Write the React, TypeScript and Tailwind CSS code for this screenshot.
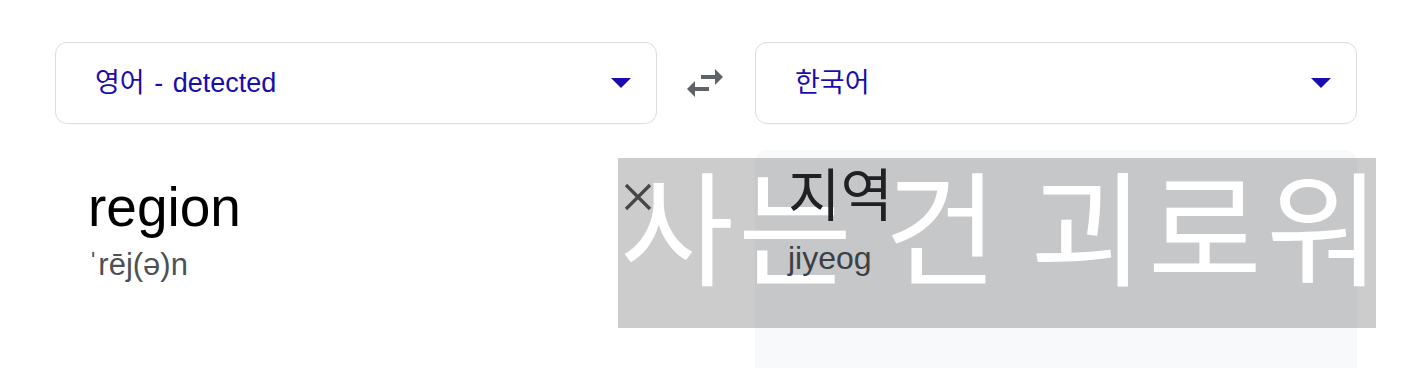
import React from 'react';

const sans = "font-['Liberation_Sans','Noto_Sans_CJK_KR',sans-serif]";

const Caret = () => (
  <svg width="20" height="10" viewBox="0 0 20 10" className="shrink-0">
    <path d="M0 0h20L10 10z" fill="#1a0dab" />
  </svg>
);

const LangSelect: React.FC<{ label: string }> = ({ label }) => (
  <button className="flex items-center justify-between w-[602px] h-[82px] pl-[39px] pr-[25px] border border-[#dadce0] rounded-[12px] bg-white text-left">
    <span className="text-[27px] leading-none text-[#1a0dab] [word-spacing:2px]">{label}</span>
    <Caret />
  </button>
);

export default function App() {
  return (
    <div className={`relative w-[1416px] h-[368px] overflow-hidden bg-white ${sans}`}>
      <div className="pt-[42px] pl-[55px]">
        {/* language pickers */}
        <div className="flex items-center">
          <LangSelect label="영어 - detected" />
          <div className="w-[98px] flex justify-center">
            <svg width="48" height="48" viewBox="0 0 24 24" className="-ml-[2px]">
              <path
                d="M6.99 11L3 15l3.99 4v-3H14v-2H6.99v-3zM21 9l-4-4v3H10v2h7v3l4-4z"
                fill="#5f6368"
              />
            </svg>
          </div>
          <LangSelect label="한국어" />
        </div>

        {/* source / result */}
        <div className="flex mt-[26px]">
          <div className="w-[602px] h-[250px] flex justify-between pl-[33px] pr-[5px]">
            <div className="pt-[26px]">
              <div className="text-[55px] leading-[62px] text-black">region</div>
              <div className="text-[31px] leading-[36px] text-[#4d5156] mt-[9px]">ˈrēj(ə)n</div>
            </div>
            <button className="relative z-20 w-[28px] h-[28px] mt-[33px]">
              <svg width="28" height="28" viewBox="0 0 28 28">
                <path d="M2 2l24 24M26 2L2 26" stroke="#464646" strokeWidth="3.2" />
              </svg>
            </button>
          </div>
          <div className="w-[98px]" />
          <div className="w-[602px] h-[250px] bg-[#f8f9fa] rounded-t-[12px] pl-[33px] pt-[10px]">
            <div className="relative z-20 text-[57px] leading-[72px] text-[#202124]">지역</div>
            <div className="relative z-20 text-[32px] leading-[38px] text-[#3c4043] mt-[7px]">jiyeog</div>
          </div>
        </div>
      </div>

      {/* caption overlay */}
      <div className="absolute z-10 left-[618px] top-[158px] w-[758px] h-[170px] bg-black/20 overflow-hidden">
        <div className="pl-[2px] text-[124px] leading-[128px] text-white whitespace-nowrap font-['Noto_Sans_CJK_KR',sans-serif] tracking-[4px] [word-spacing:-4px]">
          사는 건 괴로워
        </div>
      </div>
    </div>
  );
}
